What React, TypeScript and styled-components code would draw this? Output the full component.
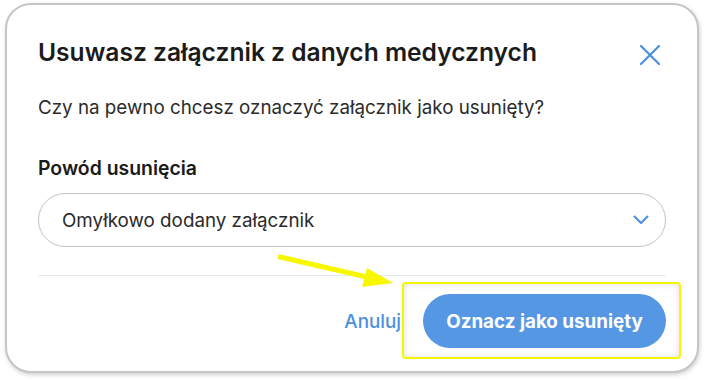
import React from 'react';
import styled, { createGlobalStyle } from 'styled-components';

const GlobalStyle = createGlobalStyle`
  * {
    box-sizing: border-box;
  }
  body {
    margin: 0;
    background: #ffffff;
    font-family: 'Inter', 'Liberation Sans', sans-serif;
  }
`;

const Page = styled.div`
  width: 704px;
  height: 380px;
  padding: 3px 5px;
`;

const Card = styled.div`
  position: relative;
  width: 694px;
  height: 370px;
  border: 2px solid #c6c6c6;
  border-radius: 26px;
  background: #ffffff;
  box-shadow: 1px 2px 4px rgba(0, 0, 0, 0.18);
  padding: 32px 31px 23px 31px;
  display: flex;
  flex-direction: column;
`;

const Header = styled.div`
  display: flex;
  justify-content: space-between;
  align-items: flex-start;
`;

const Title = styled.h2`
  margin: 0;
  font-size: 24.6px;
  line-height: 30px;
  font-weight: 600;
  color: #1b1b1b;
  white-space: nowrap;
`;

const CloseButton = styled.button`
  border: none;
  background: none;
  padding: 0;
  margin: 8px 6px 0 0;
  width: 20px;
  height: 20px;
  display: flex;
  cursor: pointer;
`;

const Text = styled.p`
  margin: 29px 0 0;
  font-size: 18.8px;
  line-height: 24px;
  color: #2b2b2b;
  white-space: nowrap;
`;

const Label = styled.label`
  margin-top: 36px;
  font-size: 19.4px;
  line-height: 24px;
  font-weight: 600;
  color: #1b1b1b;
`;

const Select = styled.div`
  margin-top: 13px;
  height: 54px;
  border: 1.5px solid #c2c2c2;
  border-radius: 27px;
  display: flex;
  align-items: center;
  justify-content: space-between;
  padding: 0 16px 0 23px;
  font-size: 18.8px;
  color: #2a2a2a;
`;

const Divider = styled.hr`
  margin: 28px 0 0;
  border: none;
  height: 1px;
  background: #e3e9ef;
`;

const Footer = styled.div`
  margin-top: 18px;
  display: flex;
  justify-content: flex-end;
  align-items: center;
  gap: 22px;
`;

const LinkButton = styled.button`
  border: none;
  background: none;
  padding: 0;
  font-family: inherit;
  font-size: 18.8px;
  font-weight: 500;
  color: #4a8fe1;
  cursor: pointer;
`;

const PrimaryButton = styled.button`
  height: 54px;
  width: 243px;
  border: none;
  border-radius: 27px;
  background: #5597e3;
  color: #ffffff;
  font-family: inherit;
  font-size: 18.8px;
  font-weight: 700;
  cursor: pointer;
`;

const Highlight = styled.div`
  position: absolute;
  left: 395px;
  top: 277px;
  width: 279px;
  height: 77px;
  border: 2px solid #f6f600;
  border-radius: 4px;
  box-shadow: inset 0 0 6px rgba(0, 0, 0, 0.12);
  pointer-events: none;
`;

const Arrow = styled.svg`
  position: absolute;
  left: 268px;
  top: 245px;
  pointer-events: none;
`;

export default function App() {
  return (
    <Page>
      <GlobalStyle />
      <Card>
        <Header>
          <Title>Usuwasz załącznik z danych medycznych</Title>
          <CloseButton aria-label="Zamknij">
            <svg width="20" height="20" viewBox="0 0 20 20">
              <path d="M1 1L19 19M19 1L1 19" stroke="#4a8fe1" strokeWidth="2.2" strokeLinecap="round" fill="none" />
            </svg>
          </CloseButton>
        </Header>
        <Text>Czy na pewno chcesz oznaczyć załącznik jako usunięty?</Text>
        <Label>Powód usunięcia</Label>
        <Select>
          <span>Omyłkowo dodany załącznik</span>
          <svg width="16" height="10" viewBox="0 0 16 10">
            <path d="M1.5 1.5L8 8L14.5 1.5" stroke="#4a8fe1" strokeWidth="2" strokeLinecap="round" strokeLinejoin="round" fill="none" />
          </svg>
        </Select>
        <Divider />
        <Footer>
          <LinkButton>Anuluj</LinkButton>
          <PrimaryButton>Oznacz jako usunięty</PrimaryButton>
        </Footer>
        <Highlight />
        <Arrow width="125" height="47" viewBox="0 0 125 47">
          <line x1="5" y1="7" x2="92" y2="27" stroke="#f7f700" strokeWidth="5" strokeLinecap="round" />
          <polygon points="118,33 92,18 87,37" fill="#f7f700" />
        </Arrow>
      </Card>
    </Page>
  );
}
